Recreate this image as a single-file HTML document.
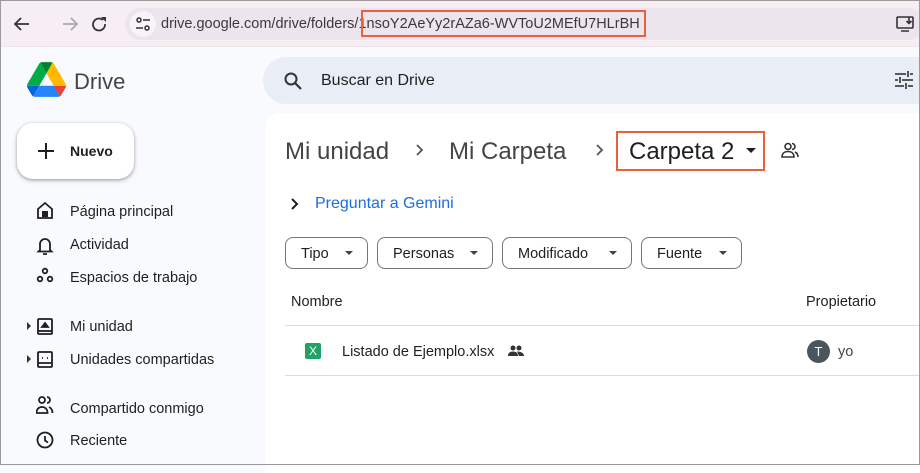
<!DOCTYPE html>
<html><head><meta charset="utf-8"><style>
*{margin:0;padding:0;box-sizing:border-box}
body{width:920px;height:465px;overflow:hidden;font-family:"Liberation Sans",Arial,sans-serif;background:#f8fafd;position:relative;color:#1f1f1f}
.a{position:absolute}
.frame{position:absolute;left:0;top:0;width:920px;height:465px;border:1px solid #9a9a9a;pointer-events:none;z-index:10}
.nav{position:absolute;left:70px;font-size:14.5px;color:#1f1f1f}
.chip{position:absolute;top:237px;height:32px;border:1px solid #747775;border-radius:8px;font-size:14.5px;color:#1f1f1f;display:flex;align-items:center;padding-left:15px;padding-top:1px}
.chip::after{content:"";position:absolute;right:14px;top:13px;border-left:4px solid transparent;border-right:4px solid transparent;border-top:4px solid #444}
</style></head><body>
<div class="a" style="left:0;top:0;width:920px;height:46px;background:#f6eef3"></div>
<div class="a" style="left:0;top:46px;width:920px;height:1px;background:#e8e4e8"></div>
<svg class="a" style="left:12px;top:14px" width="120" height="20" viewBox="0 0 120 20">
<path d="M17 10H4M9 4L3 10l6 6" stroke="#333" stroke-width="1.8" fill="none"/>
<path d="M51 10h13M59 4l6 6-6 6" stroke="#aaa" stroke-width="1.8" fill="none"/>
<path d="M91 6a6 6 0 1 0 2 4" stroke="#333" stroke-width="1.8" fill="none"/><path d="M89 3h5v5z" fill="#333"/>
</svg>
<div class="a" style="left:125px;top:8px;width:800px;height:32px;border-radius:16px;background:#ede5ee"></div>
<div class="a" style="left:130px;top:11px;width:26px;height:26px;border-radius:13px;background:#f8f3f8"></div>
<svg class="a" style="left:135px;top:16px" width="16" height="16"><circle cx="4" cy="4" r="2" stroke="#333" stroke-width="1.5" fill="none"/><path d="M8 4h7M1 12h7" stroke="#333" stroke-width="1.5"/><circle cx="12" cy="12" r="2" stroke="#333" stroke-width="1.5" fill="none"/></svg>
<div class="a" style="left:161px;top:16px;font-size:14.5px;color:#3a3a3a;white-space:nowrap">drive.google.com/drive/folders/<span>1nsoY2AeYy2rAZa6-WVToU2MEfU7HLrBH</span></div>
<div class="a" style="left:361px;top:10px;width:285px;height:27px;border:2px solid #e8603c"></div>
<svg class="a" style="left:896px;top:16px" width="20" height="16"><rect x="1" y="1" width="16" height="11" rx="1" stroke="#333" stroke-width="1.6" fill="none"/><path d="M5 15h8M13 1v6M10.5 5l2.5 2.5L15.5 5" stroke="#333" stroke-width="1.6" fill="none"/></svg>
<svg class="a" style="left:27px;top:62px" width="39" height="35" viewBox="0 0 87.3 78">
<path d="m6.6 66.85 3.85 6.650c.8 1.4 1.95 2.5 3.3 3.3l13.75-23.8h-27.5c0 1.55.4 3.1 1.2 4.5z" fill="#0066da"/>
<path d="m43.65 25-13.75-23.8c-1.35.8-2.5 1.9-3.3 3.3l-25.4 44a9.06 9.06 0 0 0 -1.2 4.5h27.5z" fill="#00ac47"/>
<path d="m73.55 76.8c1.35-.8 2.5-1.9 3.3-3.3l1.6-2.75 7.65-13.25c.8-1.4 1.2-2.95 1.2-4.5h-27.502l5.852 11.5z" fill="#ea4335"/>
<path d="m43.65 25 13.75-23.8c-1.35-.8-2.9-1.2-4.5-1.2h-18.5c-1.6 0-3.15.45-4.5 1.2z" fill="#00832d"/>
<path d="m59.8 53h-32.3l-13.75 23.8c1.35.8 2.9 1.2 4.5 1.2h50.8c1.6 0 3.150-.45 4.5-1.2z" fill="#2684fc"/>
<path d="m73.4 26.5-12.7-22c-.8-1.4-1.95-2.5-3.3-3.3l-13.75 23.8 16.15 28h27.45c0-1.55-.4-3.1-1.2-4.5z" fill="#ffba00"/>
</svg>
<div class="a" style="left:74px;top:69px;font-size:22px;color:#444">Drive</div>
<div class="a" style="left:263px;top:57px;width:680px;height:47px;border-radius:24px;background:#e9eef6"></div>
<svg class="a" style="left:283px;top:71px" width="20" height="20"><circle cx="8" cy="8" r="5.5" stroke="#333" stroke-width="2" fill="none"/><path d="M12 12l6 6" stroke="#333" stroke-width="2.2"/></svg>
<div class="a" style="left:321px;top:72px;font-size:16px;color:#1f1f1f">Buscar en Drive</div>
<svg class="a" style="left:894px;top:70px" width="20" height="20"><path d="M1 4h11M16 4h3M14 1v6M1 10h3M8 10h11M6 7v6M1 16h9M14 16h5M12 13v6" stroke="#444" stroke-width="1.8"/></svg>
<div class="a" style="left:265px;top:113px;width:680px;height:360px;background:#fff;border-radius:16px 0 0 0"></div>
<div class="a" style="left:17px;top:123px;width:117px;height:56px;background:#fff;border-radius:16px;box-shadow:0 1px 3px rgba(0,0,0,.3),0 2px 6px rgba(0,0,0,.12)"></div>
<svg class="a" style="left:37px;top:142px" width="18" height="18"><path d="M9 1v16M1 9h16" stroke="#1f1f1f" stroke-width="2"/></svg>
<div class="a" style="left:70px;top:143px;font-size:14px;font-weight:bold;color:#1f1f1f">Nuevo</div>
<svg class="a" style="left:36px;top:201px" width="18" height="250" viewBox="0 0 18 250" fill="none" stroke="#1f1f1f" stroke-width="1.8">
<path d="M2 8l7-6 7 6v9H2z"/><rect x="6" y="10" width="6" height="6" fill="#1f1f1f" stroke="none"/>
<path d="M4 49v-6a5 5 0 0 1 10 0v6l1.5 1.5h-13zM7 53h4"/>
<circle cx="9" cy="70" r="2.3"/><circle cx="4" cy="78" r="2.3"/><circle cx="14" cy="78" r="2.3"/>
<rect x="2" y="118" width="14" height="15" rx="1"/><path d="M2 130h14" /><path d="M6 126l3-4 3 4z" fill="#1f1f1f"/>
<rect x="2" y="151" width="14" height="15" rx="1"/><path d="M2 162h14M6 157h1M11 157h1"/>
<circle cx="6" cy="199" r="3"/><path d="M0.5 212c0-4 2.5-6 5.5-6s5.5 2 5.5 6z"/><path d="M11 196a3 3 0 0 1 0 6M13 206c2 1 3.5 3 3.5 6"/>
<circle cx="9" cy="239" r="7.5"/><path d="M9 235v4.5l3 2"/>
</svg>
<svg class="a" style="left:26px;top:321px" width="6" height="45"><path d="M1 1l4 4-4 4zM1 34l4 4-4 4z" fill="#333"/></svg>
<div class="nav" style="top:204px">Página principal</div>
<div class="nav" style="top:237px">Actividad</div>
<div class="nav" style="top:270px">Espacios de trabajo</div>
<div class="nav" style="top:319px">Mi unidad</div>
<div class="nav" style="top:352px">Unidades compartidas</div>
<div class="nav" style="top:401px">Compartido conmigo</div>
<div class="nav" style="top:433px">Reciente</div>
<div class="a" style="left:285px;top:138px;font-size:24px;color:#444;white-space:nowrap">Mi unidad</div>
<svg class="a" style="left:415px;top:143px" width="10" height="14"><path d="M2 2l5 5-5 5" stroke="#555" stroke-width="1.8" fill="none"/></svg>
<div class="a" style="left:449px;top:138px;font-size:24px;color:#444;white-space:nowrap">Mi Carpeta</div>
<svg class="a" style="left:595px;top:143px" width="10" height="14"><path d="M2 2l5 5-5 5" stroke="#555" stroke-width="1.8" fill="none"/></svg>
<div class="a" style="left:629px;top:138px;font-size:24px;color:#1f1f1f;white-space:nowrap">Carpeta 2</div>
<div class="a" style="left:746px;top:148px;border-left:5px solid transparent;border-right:5px solid transparent;border-top:5px solid #1f1f1f"></div>
<div class="a" style="left:616px;top:131px;width:149px;height:40px;border:2px solid #e8603c"></div>
<svg class="a" style="left:781px;top:142px" width="20" height="16" fill="none" stroke="#333" stroke-width="1.6"><circle cx="7" cy="4.5" r="3"/><path d="M1 15c0-4 3-5.5 6-5.5s6 1.5 6 5.5z"/><path d="M11 1.5a3 3 0 0 1 0 6M14 10c2 1 3 2.5 3 5"/></svg>
<svg class="a" style="left:290px;top:197px" width="10" height="14"><path d="M2 2l5 5-5 5" stroke="#1f1f1f" stroke-width="2" fill="none"/></svg>
<div class="a" style="left:315px;top:195px;font-size:16px;color:#1a6ee0">Preguntar a Gemini</div>
<div class="chip" style="left:285px;width:83px">Tipo</div>
<div class="chip" style="left:377px;width:116px">Personas</div>
<div class="chip" style="left:502px;width:130px">Modificado</div>
<div class="chip" style="left:641px;width:101px">Fuente</div>
<div class="a" style="left:291px;top:294px;font-size:14.5px;color:#1f1f1f">Nombre</div>
<div class="a" style="left:806px;top:294px;font-size:14.5px;color:#1f1f1f">Propietario</div>
<div class="a" style="left:285px;top:325px;width:640px;height:1px;background:#dadce0"></div>
<div class="a" style="left:285px;top:375px;width:640px;height:1px;background:#dadce0"></div>
<div class="a" style="left:305px;top:343px;width:16px;height:16px;background:#1fa463;border-radius:2px;color:#fff;font-size:12px;text-align:center;line-height:16px">X</div>
<div class="a" style="left:342px;top:344px;font-size:14.5px;color:#1f1f1f">Listado de Ejemplo.xlsx</div>
<svg class="a" style="left:508px;top:345px" width="16" height="12" fill="#333"><circle cx="5" cy="3" r="2.5"/><circle cx="11" cy="3" r="2.5"/><path d="M0 11c0-3 2-4.5 5-4.5s5 1.5 5 4.5zM9 6.5c3 0 7 1 7 4.5h-5z"/></svg>
<div class="a" style="left:807px;top:340px;width:23px;height:23px;border-radius:50%;background:#4a5560;color:#fff;font-size:13px;text-align:center;line-height:23px">T</div>
<div class="a" style="left:838px;top:344px;font-size:14.5px;color:#444">yo</div>
<div class="frame"></div>
</body></html>
